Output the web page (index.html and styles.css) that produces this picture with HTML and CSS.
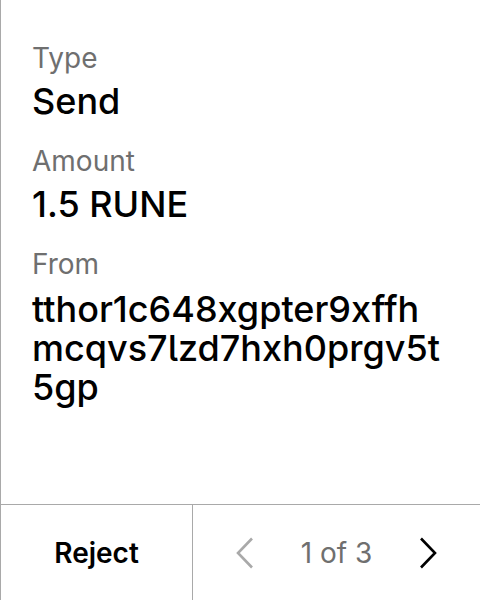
FILE: index.html
```html
<!DOCTYPE html>
<html lang="en">
<head>
<meta charset="utf-8">
<title>Review transaction</title>
<link rel="stylesheet" href="styles.css">
</head>
<body>
<div class="screen">
  <main class="fields">
    <div class="field">
      <div class="tag">Type</div>
      <div class="value">Send</div>
    </div>
    <div class="field">
      <div class="tag">Amount</div>
      <div class="value">1.5 RUNE</div>
    </div>
    <div class="field">
      <div class="tag">From</div>
      <div class="value addr">tthor1c648xgpter9xffhmcqvs7lzd7hxh0prgv5t5gp</div>
    </div>
  </main>
  <footer class="footer">
    <div class="reject">Reject</div>
    <div class="nav">
      <svg class="chev chev-off" width="18" height="32" viewBox="0 0 18 32" aria-hidden="true"><polyline points="16,1.5 2,16 16,30.5"/></svg>
      <span class="page">1 of 3</span>
      <svg class="chev" width="18" height="32" viewBox="0 0 18 32" aria-hidden="true"><polyline points="2,1.5 16,16 2,30.5"/></svg>
    </div>
  </footer>
</div>
</body>
</html>
```
FILE: styles.css
```css
html, body {
  margin: 0;
  padding: 0;
  background: #ffffff;
}
body {
  font-family: Inter, "Noto Sans", sans-serif;
  color: #000000;
  font-feature-settings: "cv05" 1;
}
.screen {
  width: 480px;
  height: 600px;
  box-sizing: border-box;
  border-left: 1px solid #a9a9a9;
  display: flex;
  flex-direction: column;
}
.fields {
  flex: 1;
  padding: 40px 36px 0 31px;
  display: flex;
  flex-direction: column;
  gap: 20px;
}
.field {
  display: flex;
  flex-direction: column;
  gap: 3px;
}
.tag {
  font-size: 28px;
  line-height: 36px;
  color: #6f6f6f;
}
.value {
  font-size: 36px;
  line-height: 44px;
  font-weight: 500;
}
.addr {
  word-break: break-all;
  line-height: 39px;
  margin-top: 5px;
}
.footer {
  height: 96px;
  border-top: 1px solid #a9a9a9;
  box-sizing: border-box;
  display: flex;
}
.reject {
  width: 191px;
  border-right: 1px solid #a9a9a9;
  display: flex;
  align-items: center;
  justify-content: center;
  font-size: 28px;
  font-weight: 600;
}
.nav {
  flex: 1;
  display: flex;
  align-items: center;
  justify-content: center;
  gap: 47px;
}
.page {
  font-size: 28px;
  color: #6f6f6f;
}
.chev polyline {
  fill: none;
  stroke: #000000;
  stroke-width: 2.6;
}
.chev-off polyline {
  stroke: #a9a9a9;
}
```
